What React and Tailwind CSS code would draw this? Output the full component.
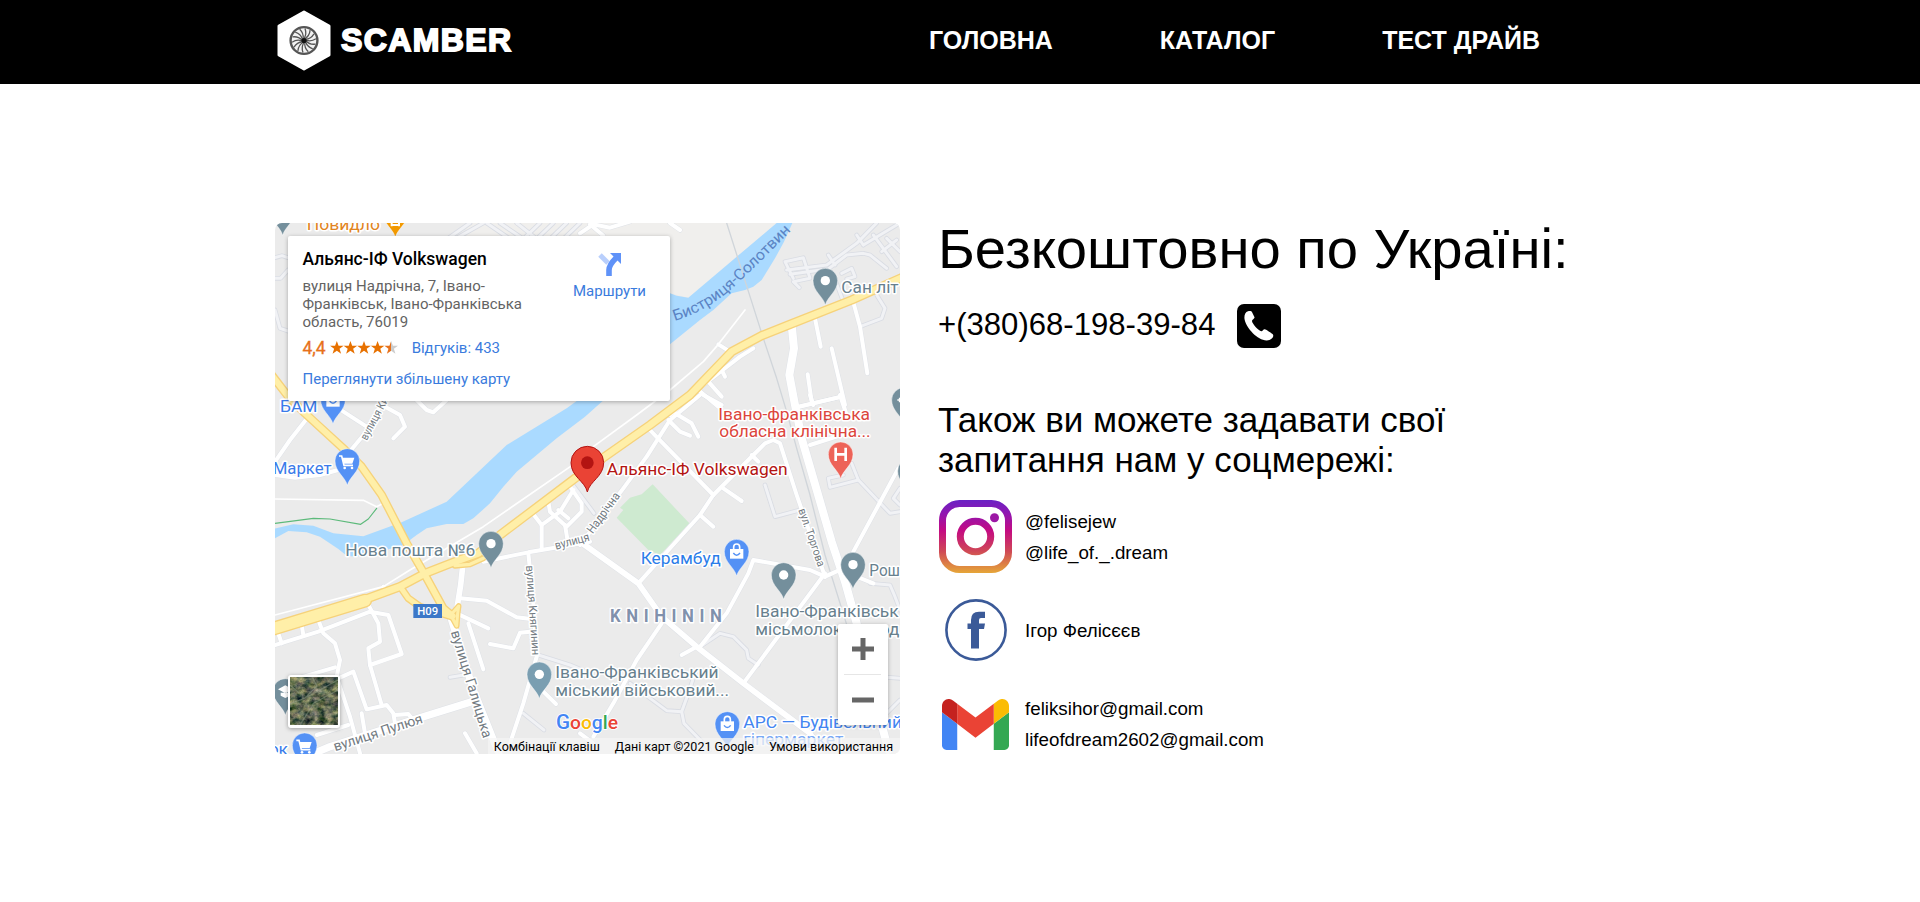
import React from "react";

// The map is drawn at triple scale on six sheets; each letter names a sheet's origin.
const SHEETS = {
  A: [810, 645],
  B: [1740, 645],
  C: [810, 1185],
  D: [1740, 1185],
  E: [810, 1710],
  F: [1740, 1710],
};

function at(sheet, x, y) {
  return [SHEETS[sheet][0] + x, SHEETS[sheet][1] + y];
}

function trace(spec) {
  let sheet = "A";
  const out = [];
  spec.split(/\s+/).forEach((t) => {
    if (SHEETS[t]) sheet = t;
    else {
      const [x, y] = t.split(",").map(Number);
      out.push(at(sheet, x, y).join(","));
    }
  });
  return "M" + out.join("L");
}

const lanes = [
  "A 15,190 32,190 54,165", "A 15,128 36,122 54,128", "A 15,285 30,340 54,348",
  "A 640,24 555,72", "A 600,24 520,80", "A 690,24 760,72", "A 650,24 720,72", "A 740,24 800,72",
  "A 760,72 810,24", "A 800,72 850,24", "A 840,72 890,24", "A 880,72 930,24",
  "B 640,190 615,140 670,128 690,190 640,200 658,218", "B 620,165 740,150 830,85 890,24",
  "B 630,178 745,162 800,120 850,115 870,120 920,160", "B 830,60 850,90", "B 745,120 765,150", "B 850,90 950,30",
  "B 880,60 950,155", "B 920,70 960,110", "B 905,110 950,75", "B 785,175 815,160 825,185 800,192", "B 760,180 790,260",
  "B 890,240 915,280 905,310 840,335", "D 555,270 585,365 660,345", "D 815,205 835,255 750,277 745,250 790,240",
  "D 835,255 930,355 960,350", "D 960,280 940,310 960,330", "F 360,230 420,190 460,200 500,240 505,265 535,285",
  "F 150,340 260,422 305,425 325,370 345,310", "F 305,425 312,460 390,540", "F 870,40 930,45 945,80 960,120",
  "E 805,255 900,285 960,310", "E 540,322 600,312", "E 760,430 822,480", "C 905,265 D 42,355", "F 900,320 960,325", "F 910,440 960,390",
];

const streets = [
  "C 435,10 470,45 490,52 530,15", "B 0,55 40,28 90,38 150,20", "B 30,28 70,62", "B 270,24 300,45",
  "B 820,262 840,335 862,475", "B 705,310 722,395", "B 755,400 795,570", "B 683,478 695,560", "B 655,575 785,545",
  "B 450,410 415,388", "B 520,400 480,425 350,525 270,600", "B 385,500 425,545", "B 425,465 435,485", "B 355,525 415,575",
  "D 360,0 270,75 200,185 130,280 0,450", "D 265,75 300,110 330,122", "D 285,55 335,85 355,125", "D 370,0 425,30",
  "D 205,100 400,300", "D 430,280 485,318", "D 360,360 400,395", "D 175,565 360,360 400,300 520,180 555,145 580,135 600,145 650,300 735,545",
  "D 515,180 535,200", "D 660,35 785,5", "D 780,0 800,60", "D 690,150 800,115", "D 955,220 820,470", "D 690,0 700,30",
  "F 735,10 490,340", "D 735,545 790,520", "D 735,545 690,525 520,495 505,535 F 440,130 360,230", "F 350,230 305,255",
  "F 245,160 170,270 100,400 40,500", "F 0,490 40,520", "F 780,0 880,40",
  "C 115,65 60,135 15,200", "C 15,240 75,248 150,240 215,222", "C 205,40 290,95", "C 345,35 390,60 405,95 370,130",
  "C 235,175 285,115 340,15", "C 790,358 815,390 870,350 910,285", "C 835,320 840,350 890,395 935,350 935,325 900,275",
  "C 815,390 815,460", "C 885,390 895,450", "C 640,500 775,472 960,440 D 10,432", "C 865,345 895,370",
  "C 775,475 E 790,100 800,260 760,400 720,520", "E 15,225 145,185 300,125 355,135 395,252 300,285",
  "E 290,95 325,160 330,215 295,235 300,285 335,405", "E 145,150 160,190 195,220 210,270 200,320 240,440 270,550",
  "E 95,165 100,195", "E 25,190 35,220", "E 50,335 195,292", "E 205,325 250,305 290,418 350,405 370,430 375,460",
  "E 375,435 415,432 430,450", "E 140,495 235,465", "E 275,430 285,490", "E 570,85 650,92 740,142 790,148",
  "E 560,130 655,175", "E 595,160 640,298", "E 780,185 750,188 730,235 660,222", "E 585,490 620,550", "E 820,365 858,402", "E 340,50 355,70",
];

const avenues = [
  ["B 635,330 642,400 628,480 645,570 D 665,130 700,250 755,440 F 795,35 830,160 870,330 925,540", 24],
  ["D 0,440 175,565 F 245,140 350,230 490,340 690,490 720,540", 17],
  ["E 60,580 180,530 460,440 605,395", 22],
  ["E 545,150 610,360 690,560", 22],
  ["C 578,515 572,570 E 560,120", 17],
];

const tracks = [
  "B 415,388 495,285", "B 415,388 370,440 270,525 170,600 D 40,155", "C 915,205 640,395 420,525 E 340,50 15,135",
  "C 15,312 280,316 320,335 340,325",
];

const yellow = [
  ["E 10,176 140,136 285,92", 34],
  ["E 280,90 390,50 465,10 C 560,498 625,475 690,420 915,250 D 60,195 210,90 330,0 B 455,410 545,362 630,328 815,255 965,188", 20],
  ["A 5,480 C 55,5 105,55 225,165 275,215 335,300 410,445 465,540 E 520,115 548,138", 18],
  ["E 392,52 415,85 450,110 545,140", 15],
  ["E 520,125 545,132 566,108 563,130 560,168 545,140", 9],
  ["C 555,512 600,508 640,490", 10],
];

function Pin({ s, x, y, fill = "#748f9c", children }) {
  return (
    <g transform={`translate(${at(s, x, y).join(" ")})`}>
      <path d="M0,73C-6,48-37,32-37,0A37,37 0 1 1 37,0C37,32 6,48 0,73Z" fill={fill} stroke="#fff" strokeOpacity=".45" strokeWidth="3" />
      {children || <circle r="14" fill="#fff" />}
    </g>
  );
}

function Bag() {
  return (
    <g>
      <path d="M-20,-8H20V21H-20Z" fill="#fff" />
      <path d="M-9,-6V-14A9,9 0 0 1 9,-14V-6" fill="none" stroke="#fff" strokeWidth="5" />
      <path d="M-10,4Q0,17 10,4" fill="none" stroke="#5491f5" strokeWidth="4.5" />
    </g>
  );
}

function Cart() {
  return (
    <g>
      <path d="M-25,-15H-17L-10,13H17" fill="none" stroke="#fff" strokeWidth="5" />
      <path d="M-15,-10H21L15,8H-11Z" fill="#fff" />
      <circle cx="-8" cy="21" r="4" fill="#fff" />
      <circle cx="14" cy="21" r="4" fill="#fff" />
    </g>
  );
}

function Label({ s, x, y, w, fill = "#67808d", size = 49, rotate = 0, weight = 400, children }) {
  const [px, py] = at(s, x, y);
  return (
    <text
      transform={`translate(${px} ${py}) rotate(${rotate})`}
      textLength={w}
      lengthAdjust="spacingAndGlyphs"
      fontSize={size}
      fontWeight={weight}
      fill={fill}
      stroke="#fff"
      strokeWidth="9"
      strokeLinejoin="round"
      paintOrder="stroke"
    >
      {children}
    </text>
  );
}

function MapDrawing() {
  return (
    <svg className="block h-[531px] w-[625px] font-[Roboto,sans-serif]" viewBox="825 669 1875 1593">
      <rect x="825" y="669" width="1875" height="1593" fill="#ebebeb" />
      <path d={trace("A 590,24 B 590,24 325,248 270,235 A 590,235") + "Z"} fill="#f0efed" />
      <path
        fill="#aadaff"
        d={trace("B 590,24 637,24 612,80 585,130 545,195 520,215 495,225 455,235 400,285 360,315 270,388 D 68,18 C 945,65 860,130 740,230 700,275 660,325 610,370 580,387 530,387 470,400 440,420 400,450 330,470 260,485 230,482 205,462 150,425 110,412 55,408 15,430 10,402 70,388 130,392 190,415 280,424 395,382 530,320 710,150 890,40 920,18 B 270,235 290,242 325,248") + "Z"}
      />
      <path fill="#ceead0" d={trace("D 218,268 328,385 240,480 205,465 110,368 130,345 120,338 150,308 185,298") + "Z"} />
      <g fill="none" strokeLinejoin="round" strokeLinecap="round">
        <path d={trace("B 440,24 550,370 590,490 620,590 D 650,160 690,300 735,480 F 830,260")} stroke="#d0d5da" strokeWidth="4" />
        {lanes.map((d) => <path key={d} d={trace(d)} stroke="#d9dce3" strokeWidth="14" />)}
        {streets.map((d) => <path key={d} d={trace(d)} stroke="#dfe2e7" strokeWidth="15" />)}
        {avenues.map(([d, w]) => <path key={d} d={trace(d)} stroke="#dfe2e7" strokeWidth={w + 3} />)}
        {lanes.map((d) => <path key={d} d={trace(d)} stroke="#f1f2f5" strokeWidth="9" />)}
        {tracks.map((d) => <path key={d} d={trace(d)} stroke="#fff" strokeWidth="5" />)}
        {streets.map((d) => <path key={d} d={trace(d)} stroke="#fff" strokeWidth="12" />)}
        {avenues.map(([d, w]) => <path key={d} d={trace(d)} stroke="#fff" strokeWidth={w} />)}
        <path d={trace("C 15,385 130,370 180,372 272,388 295,372 320,340")} stroke="#5dba7b" strokeWidth="3.5" />
        {yellow.map(([d, w]) => <path key={d} d={trace(d)} stroke="#f6d27a" strokeWidth={w + 8} />)}
        {yellow.map(([d, w]) => <path key={d} d={trace(d)} stroke="#ffefa8" strokeWidth={w} />)}
      </g>

      <path id="river" d={`M${at("B", 284, 318)}Q${at("B", 385, 288)} ${at("B", 470, 208)}T${at("B", 650, 30)}`} fill="none" />
      <text fontSize="46" fill="#5b84c4"><textPath href="#river" textLength="448" lengthAdjust="spacingAndGlyphs">Бистриця-Солотвин</textPath></text>

      <Label s="C" x={290} y={138} w={140} size={34} rotate={-62} fill="#737b82">вулиця Ки</Label>
      <Label s="C" x={858} y={464} w={106} size={36} rotate={-15} fill="#737b82">вулиця</Label>
      <Label s="D" x={38} y={418} w={142} size={36} rotate={-54} fill="#737b82">Надрічна</Label>
      <Label s="D" x={655} y={345} w={182} size={34} rotate={71} fill="#737b82">вул. Торгова</Label>
      <Label s="C" x={768} y={512} w={270} size={34} rotate={86} fill="#737b82">вулиця Княгинин</Label>
      <Label s="E" x={542} y={186} w={335} size={42} rotate={73} fill="#737b82">вулиця Галицька</Label>
      <Label s="E" x={196} y={544} w={278} size={42} rotate={-18} fill="#737b82">вулиця Пулюя</Label>

      <Label s="A" x={110} y={46} w={220} fill="#e18422">Повидло</Label>
      <Pin s="A" x={376} y={-6} fill="#f29900"><path d="M-11,0V40M11,0V40M-14,36H14" stroke="#fff" strokeWidth="6" /></Pin>
      <Pin s="A" x={38} y={-12} />
      <Label s="C" x={30} y={52} w={112} fill="#3a7bea">БАМ</Label>
      <Pin s="C" x={189} y={14} fill="#5491f5"><Bag /></Pin>
      <Label s="C" x={8} y={236} w={177} fill="#3a7bea">Маркет</Label>
      <Pin s="C" x={232} y={198} fill="#5491f5"><Cart /></Pin>
      <Label s="C" x={226} y={484} w={390}>Нова пошта №6</Label>
      <Pin s="C" x={663} y={446} />
      <Label s="B" x={784} y={234} w={172}>Сан літ</Label>
      <Pin s="B" x={736} y={197} />
      <Label s="D" x={415} y={74} w={455} fill="#dc453c">Івано-франківська</Label>
      <Label s="D" x={418} y={125} w={454} fill="#dc453c">обласна клінічна...</Label>
      <Pin s="D" x={782} y={178} fill="#ed6358"><path d="M-15,-20V20M15,-20V20M-15,0H15" stroke="#fff" strokeWidth="8" /></Pin>
      <Pin s="D" x={972} y={15}><path d="M-20,0H-6M-13,-7V7" stroke="#fff" strokeWidth="5" /></Pin>
      <Pin s="D" x={990} y={228} />
      <Label s="D" x={182} y={508} w={240} fill="#2b7de9">Керамбуд</Label>
      <Pin s="D" x={470} y={470} fill="#5491f5"><Bag /></Pin>
      <Pin s="D" x={611} y={540} />
      <Pin s="D" x={819} y={509} />
      <Label s="D" x={868} y={544} w={92}>Рош</Label>
      <Label s="F" x={526} y={142} w={430}>Івано-Франківськ</Label>
      <Label s="F" x={526} y={194} w={432}>місьмолокозавод</Label>
      <Label s="F" x={90} y={157} w={352} weight={700} size={54} fill="#8191ac">
        <tspan letterSpacing="18">KNIHININ</tspan>
      </Label>
      <Pin s="E" x={808} y={313} fill="#7a9eb1" />
      <Label s="E" x={856} y={324} w={490}>Івано-Франківський</Label>
      <Label s="E" x={856} y={377} w={521}>міський військовий...</Label>
      <Pin s="E" x={46} y={363}><path d="M-22,-5L0,-17L22,-5L0,7ZM-14,5V14L0,21L14,14V5" fill="#fff" /></Pin>
      <Label s="E" x={-4} y={554} w={58} fill="#3a7bea">ок</Label>
      <Pin s="E" x={104} y={526} fill="#5491f5"><Cart /></Pin>
      <Pin s="F" x={442} y={462} fill="#5491f5"><Bag /></Pin>
      <Label s="F" x={490} y={474} w={476} fill="#4385f1">АРС — Будівельний</Label>
      <Label s="F" x={490} y={526} w={300} fill="#7aa9f5">гіпермаркет</Label>

      <g transform={`translate(${at("E", 430, 102).join(" ")})`}>
        <rect width="86" height="42" fill="#3c78c8" />
        <text x="43" y="33" fontSize="34" fontWeight="500" fill="#fff" textAnchor="middle">H09</text>
      </g>

      <Label s="D" x={80} y={240} w={543} fill="#b31412">Альянс-ІФ Volkswagen</Label>
      <g transform={`translate(${at("D", 22, 203).join(" ")})`}>
        <path d="M0,88C-7,55-49,42-49,0A49,49 0 1 1 49,0C49,42 7,55 0,88Z" fill="#ea4335" stroke="#b31412" strokeWidth="3" />
        <circle r="19" fill="#b31412" />
      </g>

      <text x={at("E", 858, 0)[0]} y={at("E", 0, 478)[1]} fontSize="56" fontWeight="500" textLength="186" lengthAdjust="spacingAndGlyphs" stroke="#fff" strokeWidth="5" paintOrder="stroke">
        <tspan fill="#4285f4" fontSize="60">G</tspan><tspan fill="#ea4335">o</tspan><tspan fill="#fbbc04">o</tspan><tspan fill="#4285f4">g</tspan><tspan fill="#34a853">l</tspan><tspan fill="#ea4335">e</tspan>
      </text>
    </svg>
  );
}

const STAR = "M7 0l1.8 5H14L9.8 8.1 11.4 13.2 7 10.1 2.6 13.2 4.2 8.1 0 5h5.2z";

function PlaceCard() {
  return (
    <div className="absolute left-[13px] top-[13px] flex h-[165px] w-[382px] justify-between rounded-[2px] bg-white pl-[14.500px] pr-[24px] font-[Roboto,sans-serif] text-[15px] shadow-[0_1px_4px_rgba(0,0,0,0.3)]">
      <div>
        <div className="mt-[12px] h-[23px] w-fit text-[17.5px] leading-[23px] font-medium text-black">Альянс-ІФ Volkswagen</div>
        <div className="mt-[6px] leading-[18px] whitespace-nowrap text-[#636363]">
          вулиця Надрічна, 7, Івано-<br />Франківськ, Івано-Франківська<br />область, 76019
        </div>
        <div className="mt-[6px] flex h-[22px] items-center">
          <span className="text-[17.5px] text-[#e7711b] [-webkit-text-stroke:0.3px_#e7711b]">4,4</span>
          <svg className="mb-[1px] ml-[4px] h-[13px] w-[68px]" viewBox="0 0 70 13.4">
            <defs><linearGradient id="half"><stop offset=".5" stopColor="#e7711b" /><stop offset=".5" stopColor="#ccc" /></linearGradient></defs>
            {[0, 1, 2, 3, 4].map((i) => <path key={i} d={STAR} transform={`translate(${i * 14})`} fill={i < 4 ? "#e77100" : "url(#half)"} />)}
          </svg>
          <span className="ml-[14px] pt-[1px] text-[#3a7bdd]">Відгуків: 433</span>
        </div>
        <div className="mt-[10px] leading-[20px] text-[#3a7bdd]">Переглянути збільшену карту</div>
      </div>
      <div className="flex flex-col items-center pt-[16px] text-[#3a7bdd]">
        <svg className="h-[25px] w-[25px]" viewBox="0 0 25 25">
          <path d="M3 3L11 11" stroke="#b9cffc" strokeWidth="5" />
          <path d="M12 24V18Q12 13 19 6" fill="none" stroke="#5f92f8" strokeWidth="5.6" />
          <path d="M13 1H24V12Z" fill="#5f92f8" />
        </svg>
        <div className="mt-[4px] leading-[20px]">Маршрути</div>
      </div>
    </div>
  );
}

function SatelliteThumb() {
  return (
    <div className="absolute bottom-[26px] left-[13px] h-[53px] w-[52px] rounded-[3px] border-2 border-white bg-white shadow-[0_1px_4px_rgba(0,0,0,0.35)]">
      <svg className="block h-[48px] w-[48px]" viewBox="0 0 48 48">
        <filter id="ground" x="0" y="0" width="1" height="1" colorInterpolationFilters="sRGB">
          <feTurbulence type="fractalNoise" baseFrequency=".14 .17" numOctaves="5" seed="8" />
          <feColorMatrix values="1 0 0 0 -.12  .8 .15 0 0 -.06  .6 0 .2 0 -.08  0 0 0 0 1" />
        </filter>
        <rect width="48" height="48" filter="url(#ground)" />
        <g fill="none" stroke="#8f9c88" strokeOpacity=".5" strokeWidth="1.2">
          <path d="M0 27L15 21L48 3M15 21L27 9L22 0M10 48L24 26L48 13M0 8L9 16" />
        </g>
      </svg>
    </div>
  );
}

function MapPanel() {
  return (
    <div className="relative h-[531px] w-[625px] shrink-0 overflow-hidden rounded-[7px]">
      <MapDrawing />
      <PlaceCard />
      <SatelliteThumb />
      <div className="absolute right-[12px] bottom-[29px] flex h-[101px] w-[50px] flex-col items-center rounded-[2px] bg-white shadow-[0_1px_4px_rgba(0,0,0,0.3)]">
        <svg className="h-[101px] w-[50px]" viewBox="0 0 50 101">
          <path d="M14 25H36M25 14V36M14 76H36" stroke="#666" strokeWidth="5" />
          <path d="M6 50.5H43" stroke="#e6e6e6" />
        </svg>
      </div>
      <div className="absolute right-0 bottom-0 flex h-[16px] items-center gap-[15px] bg-[#f5f5f5]/70 pr-[7px] pl-[6px] font-[Roboto,sans-serif] text-[12.5px] leading-[18px] whitespace-nowrap text-black">
        <span className="pt-[2px]">Комбінації клавіш</span>
        <span className="pt-[2px]">Дані карт ©2021 Google</span>
        <span className="pt-[2px]">Умови використання</span>
      </div>
    </div>
  );
}

function WheelLogo() {
  return (
    <svg className="h-[61px] w-[54px]" viewBox="0 0 54 61">
      <path d="M27 2L52 16V45L27 59L2 45V16Z" fill="#fff" stroke="#fff" strokeWidth="3" strokeLinejoin="round" />
      <circle cx="27" cy="30.5" r="13.4" fill="#f2f2f2" stroke="#555" strokeWidth="2.4" />
      {Array.from({ length: 14 }, (_, i) => (
        <path key={i} d="M27 28.5Q30 24 28 18.5" transform={`rotate(${(i * 360) / 14} 27 30.5)`} fill="none" stroke="#555" strokeWidth="1.3" />
      ))}
      <circle cx="27" cy="30.5" r="2.6" fill="#111" />
    </svg>
  );
}

function PhoneBadge() {
  return (
    <svg className="h-[44px] w-[44px]" viewBox="0 0 44 44">
      <rect width="44" height="44" rx="7" />
      <path
        fill="#fff"
        d="M11 7.300C13 6.800 14.600 7 15.200 8.400L17.500 13.200C18 14.500 15 15.600 15 17C15 19.500 21.500 26.800 24.300 27.200C25.600 27.400 26.200 25 27.800 25.200C29.200 25.500 33.500 28.500 35.500 29.900C36.800 31 36.300 33 35.300 34C33.500 35.800 31.500 36.600 29.500 36.500C20.500 36 9.500 24.500 7.600 15.500C6.900 12 8 8 11 7.300Z"
      />
    </svg>
  );
}

function InstagramLogo() {
  return (
    <svg className="h-[73px] w-[73px]" viewBox="0 0 73 73">
      <defs>
        <linearGradient id="ig" gradientUnits="userSpaceOnUse" x1="0" y1="0" x2="0" y2="73">
          <stop offset="0" stopColor="#6a22c4" />
          <stop offset=".2" stopColor="#9415ae" />
          <stop offset=".42" stopColor="#c40b82" />
          <stop offset=".7" stopColor="#cf4856" />
          <stop offset="1" stopColor="#e6a638" />
        </linearGradient>
      </defs>
      <g fill="none" stroke="url(#ig)" strokeWidth="7">
        <rect x="3.5" y="3.5" width="66" height="66" rx="17" />
        <circle cx="36.5" cy="36.5" r="15.2" />
      </g>
      <circle cx="55.5" cy="17.8" r="4.5" fill="#9c18a5" />
    </svg>
  );
}

function FacebookLogo() {
  return (
    <svg className="h-[62px] w-[62px]" viewBox="0 0 62 62">
      <circle cx="31" cy="31" r="29.600" fill="none" stroke="#3b5a98" strokeWidth="2.600" />
      <path transform="translate(22 12)" d="M4 37.5V18H0.5V12.5H4V9Q4 .8 12 .8H18V7H14Q12 7 12 9V12.5H18L17 18H12V37.5Z" fill="#3b5a98" />
    </svg>
  );
}

function GmailLogo() {
  return (
    <svg className="h-[51px] w-[67px]" viewBox="52 42 88 66" preserveAspectRatio="none">
      <path fill="#4285f4" d="M58 108h14V74L52 59v43c0 3.320 2.690 6 6 6" />
      <path fill="#34a853" d="M120 108h14c3.320 0 6-2.690 6-6V59l-20 15" />
      <path fill="#fbbc04" d="M120 48v26l20-15v-8c0-7.420-8.470-11.650-14.400-7.200" />
      <path fill="#ea4335" d="M72 74V48l24 18 24-18v26L96 92" />
      <path fill="#c5221f" d="M52 51v8l20 15V48l-5.600-4.200c-5.940-4.450-14.400-.22-14.400 7.200" />
    </svg>
  );
}

function Contact({ icon, lines }) {
  return (
    <div className="flex items-center">
      <div className="mr-[12px] flex w-[75px] justify-center">{icon}</div>
      <div className="text-[18.75px] leading-[31px]">
        {lines.map((l) => <div key={l}>{l}</div>)}
      </div>
    </div>
  );
}

export default function App() {
  return (
    <div className="min-h-[902px] bg-white font-['Liberation_Sans',Arial,sans-serif] text-black">
      <header className="flex h-[84px] items-center bg-black pb-[4px] pl-[277px] text-white">
        <WheelLogo />
        <div className="ml-[10px] w-[588px] text-[32px] leading-[40px] font-bold tracking-[1.4px] [-webkit-text-stroke:1.8px_white]">SCAMBER</div>
        <nav className="flex gap-[107px] text-[25px] leading-[40px] font-bold whitespace-nowrap">
          <a>ГОЛОВНА</a>
          <a>КАТАЛОГ</a>
          <a>ТЕСТ ДРАЙВ</a>
        </nav>
      </header>
      <main className="flex pt-[133px] pl-[275px]">
        <div className="pt-[6px]"><MapPanel /></div>
        <section className="ml-[38px]">
          <h1 className="text-[56.2px] leading-[64px] whitespace-nowrap">Безкоштовно по Україні:</h1>
          <div className="mt-[22px] flex h-[45px] items-center">
            <span className="w-[299px] pb-[2px] text-[31.1px] leading-[40px]">+(380)68-198-39-84</span>
            <PhoneBadge />
          </div>
          <p className="mt-[52px] text-[35px] leading-[40px] whitespace-nowrap">
            Також ви можете задавати свої<br />запитання нам у соцмережі:
          </p>
          <div className="mt-[20px] flex flex-col">
            <Contact icon={<InstagramLogo />} lines={["@felisejew", "@life_of._.dream"]} />
            <div className="mt-[26px] mb-[32px]"><Contact icon={<FacebookLogo />} lines={["Ігор Фелісєєв"]} /></div>
            <Contact icon={<GmailLogo />} lines={["feliksihor@gmail.com", "lifeofdream2602@gmail.com"]} />
          </div>
        </section>
      </main>
    </div>
  );
}
